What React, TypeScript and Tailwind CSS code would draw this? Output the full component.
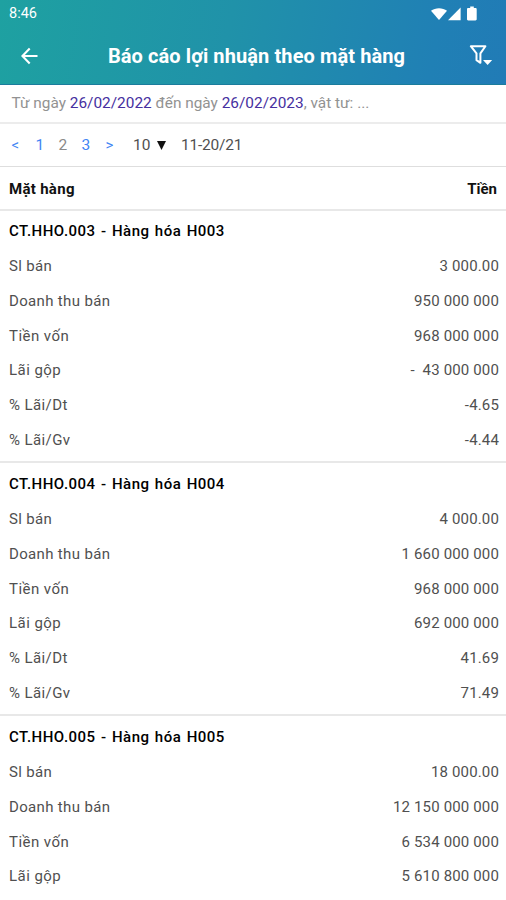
type Item = { title: string; box: string; values: string[] };

const labels = [
  { text: 'Sl bán', cls: 'tracking-[0.35px]' },
  { text: 'Doanh thu bán', cls: 'tracking-[0.34px]' },
  { text: 'Tiền vốn', cls: 'tracking-[0.45px]' },
  { text: 'Lãi gộp', cls: 'tracking-[0.45px]' },
  { text: '% Lãi/Dt', cls: 'tracking-[0.4px]' },
  { text: '% Lãi/Gv', cls: 'tracking-[0.4px]' },
];

const items: Item[] = [
  {
    title: 'CT.HHO.003 - Hàng hóa H003',
    box: 'h-[252px] pt-[3.3px] border-b-2',
    values: ['3 000.00', '950 000 000', '968 000 000', '-  43 000 000', '-4.65', '-4.44'],
  },
  {
    title: 'CT.HHO.004 - Hàng hóa H004',
    box: 'h-[253px] pt-[4.3px] border-b-2',
    values: ['4 000.00', '1 660 000 000', '968 000 000', '692 000 000', '41.69', '71.49'],
  },
  {
    title: 'CT.HHO.005 - Hàng hóa H005',
    box: 'pt-[4.3px]',
    values: ['18 000.00', '12 150 000 000', '6 534 000 000', '5 610 800 000'],
  },
];

function StatusIcons() {
  return (
    <svg width="50" height="18" viewBox="0 0 50 18" fill="#fff" className="relative top-px block">
      <path d="M0 4.8C4.2 1.3 11.8 1.3 16 4.8L8 13.9Z" />
      <path d="M29.6 1.4V14.2H17Z" />
      <path d="M37.2 2h2V.6h3.6V2h1.7c.7 0 1.2.5 1.2 1.2v10c0 .7-.5 1.2-1.2 1.2h-7.3c-.7 0-1.2-.5-1.2-1.2v-10c0-.7.5-1.2 1.2-1.2Z" />
    </svg>
  );
}

function FilterIcon() {
  return (
    <svg width="24" height="22" viewBox="0 0 24 22" fill="none" className="block">
      <path d="M1.8 1.2H16.4L11.4 8.4V17.8L7.5 15.2V8.4Z" stroke="#fff" strokeWidth="2" strokeLinejoin="round" />
      <path d="M14 14.9H23.2L18.6 19.9Z" fill="#fff" />
    </svg>
  );
}

function Section({ item }: { item: Item }) {
  return (
    <section className={`border-[#e8e8e8] pl-[9px] pr-[7px] ${item.box}`}>
      <h2 className="h-[34.8px] whitespace-pre text-[15px] font-medium leading-[34.8px] tracking-[0.48px] text-black [word-spacing:1.2px]">{item.title}</h2>
      {item.values.map((value, i) => (
        <div key={labels[i].text} className="flex h-[34.8px] items-center justify-between text-[15px] leading-[34.8px] text-[#505050]">
          <span className={labels[i].cls}>{labels[i].text}</span>
          <span className="whitespace-pre tracking-[0.15px]">{value}</span>
        </div>
      ))}
    </section>
  );
}

export default function App() {
  return (
    <div className="flex h-[900px] w-[506px] flex-col overflow-hidden bg-white font-['Roboto',sans-serif]">
      <header className="h-[85px] shrink-0 border-b border-[#1b7c9c] bg-[linear-gradient(100deg,#1ea1a1_0%,#2092a9_45%,#2080b5_85%,#217bb6_100%)] text-white">
        <div className="flex h-[27px] items-center justify-between pl-[9px] pr-[25px]">
          <span className="pt-[2px] text-[14.5px] leading-none">8:46</span>
          <StatusIcons />
        </div>
        <div className="flex h-[57px] items-center pl-[21px] pr-[13px]">
          <svg width="17" height="18" viewBox="0 0 17 18" fill="none" className="block">
            <path d="M16.5 9H1.6M8.7 1.5L1.4 9L8.7 16.5" stroke="#fff" strokeWidth="2.1" />
          </svg>
          <h1 className="flex-1 pl-[6px] text-center text-[20px] font-bold leading-6 tracking-[0.1px]">Báo cáo lợi nhuận theo mặt hàng</h1>
          <FilterIcon />
        </div>
      </header>
      <div className="flex h-[39px] shrink-0 items-center border-b-2 border-[#ececec] pl-[11.5px] text-[15.4px] text-[#929292]">
        <p className="whitespace-pre pt-px">
          Từ ngày <span className="text-[#4630a0]">26/02/2022</span> đến ngày <span className="text-[#4630a0]">26/02/2023</span>, vật tư: ...
        </p>
      </div>
      <nav className="flex h-[43px] shrink-0 items-center border-b border-[#dedede] pt-px text-[15.5px] text-[#4285f4]">
        <span className="ml-[11.5px] w-[24px] text-[15px]">&lt;</span>
        <span className="w-[23px]">1</span>
        <span className="w-[23px] text-[#8a8a8a]">2</span>
        <span className="w-[24px]">3</span>
        <span className="w-[27.5px] text-[15px]">&gt;</span>
        <span className="w-[24px] text-[#505050]">10</span>
        <svg width="9" height="9" viewBox="0 0 9 9" className="block">
          <path d="M0 0H9L4.5 9Z" fill="#111" />
        </svg>
        <span className="ml-[15px] text-[15.5px] tracking-[-0.22px] text-[#505050]">11-20/21</span>
      </nav>
      <div className="flex h-[44px] shrink-0 items-center justify-between border-b-2 border-[#e8e8e8] pl-[9px] pr-[9px] text-[15px] font-bold text-[#111]">
        <span className="pt-[2px] tracking-[0.3px]">Mặt hàng</span>
        <span className="pt-[2px]">Tiền</span>
      </div>
      <main>
        {items.map((item) => (
          <Section key={item.title} item={item} />
        ))}
      </main>
    </div>
  );
}
